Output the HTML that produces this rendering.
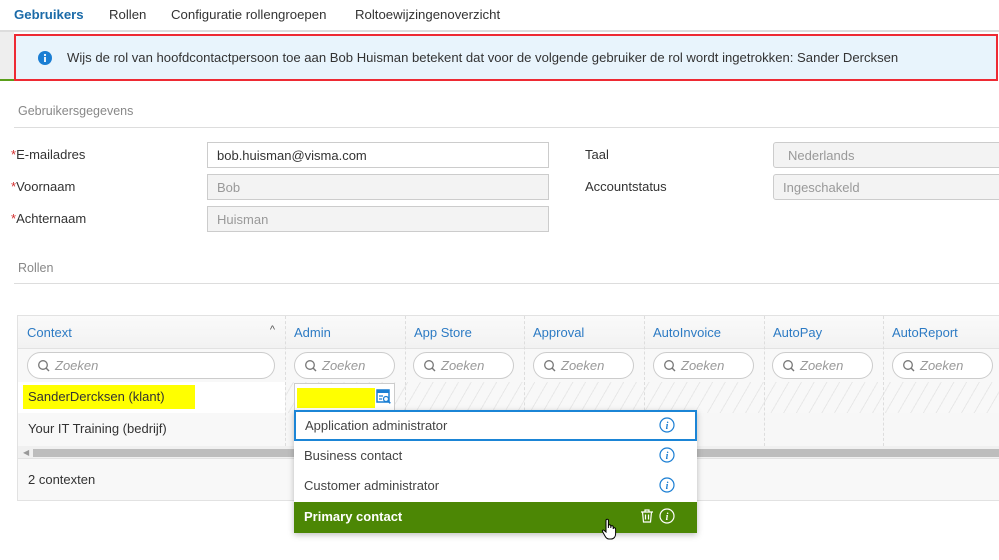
<!DOCTYPE html>
<html><head><meta charset="utf-8">
<style>
*{box-sizing:border-box;margin:0;padding:0}
body{width:999px;height:560px;overflow:hidden;background:#fff;font-family:"Liberation Sans",sans-serif;font-size:13px;color:#333;position:relative}
.a{position:absolute;white-space:nowrap}
.tab{top:7px;font-size:13.2px;color:#333}
.lbl{font-size:13px;color:#333}
.req{color:#d32f2f}
.inp{position:absolute;height:26px;border:1px solid #ccc;background:#f3f3f3;color:#999;font-size:13px;padding:5px 9px;white-space:nowrap;overflow:hidden}
.sec{font-size:12.5px;color:#888}
.hl{position:absolute;height:1px;background:#ddd}
.th{position:absolute;top:316px;height:33px;font-size:13px;color:#2d7bc4;padding:9px 9px}
.pill{position:absolute;top:352px;height:27px;border:1px solid #ccc;border-radius:14px;background:#fff;font-style:italic;color:#999;font-size:13px;padding:5px 0 0 27px}
.pill svg{position:absolute;left:9px;top:6px}
.vd{position:absolute;top:316px;height:130px;width:0;border-left:1px dashed #ddd}
.dd{position:absolute;left:294px;width:403px;height:31px;font-size:13px;color:#444;padding:7px 10px;background:#fff}
.ii{position:absolute;right:22px;top:6px}
</style></head><body>
<div class="a tab" style="left:14px;color:#1a6aa8;font-weight:bold">Gebruikers</div>
<div class="a tab" style="left:109px">Rollen</div>
<div class="a tab" style="left:171px">Configuratie rollengroepen</div>
<div class="a tab" style="left:355px">Roltoewijzingenoverzicht</div>
<div class="a" style="left:0;top:30px;width:999px;height:2px;background:#ddd"></div>
<div class="a" style="left:0;top:32px;width:14px;height:48px;background:#eee"></div>
<div class="a" style="left:0;top:79px;width:14px;height:2px;background:#5a9e1a"></div>
<div class="a" style="left:14px;top:34px;width:984px;height:47px;border:2px solid #ee2a33;background:#e8f4fc"></div>
<svg class="a" style="left:38px;top:51px" width="14" height="14" viewBox="0 0 14 14"><circle cx="7" cy="7" r="7" fill="#1a7ed3"/><rect x="6.1" y="6" width="1.8" height="5" fill="#fff"/><circle cx="7" cy="4" r="1.1" fill="#fff"/></svg>
<div class="a" style="left:67px;top:50px;font-size:13.1px;color:#333">Wijs de rol van hoofdcontactpersoon toe aan Bob Huisman betekent dat voor de volgende gebruiker de rol wordt ingetrokken: Sander Dercksen</div>
<div class="a sec" style="left:18px;top:104px">Gebruikersgegevens</div>
<div class="hl" style="left:14px;top:127px;width:985px"></div>
<div class="a lbl" style="left:11px;top:147px"><span class="req">*</span>E-mailadres</div>
<div class="a lbl" style="left:11px;top:179px"><span class="req">*</span>Voornaam</div>
<div class="a lbl" style="left:11px;top:211px"><span class="req">*</span>Achternaam</div>
<div class="inp" style="left:207px;top:142px;width:342px;background:#fff;color:#333">bob.huisman@visma.com</div>
<div class="inp" style="left:207px;top:174px;width:342px">Bob</div>
<div class="inp" style="left:207px;top:206px;width:342px">Huisman</div>
<div class="a lbl" style="left:585px;top:147px">Taal</div>
<div class="a lbl" style="left:585px;top:179px">Accountstatus</div>
<div class="inp" style="left:773px;top:142px;width:240px;padding-left:14px;border-radius:3px">Nederlands</div>
<div class="inp" style="left:773px;top:174px;width:240px;border-radius:3px">Ingeschakeld</div>
<div class="a sec" style="left:18px;top:261px">Rollen</div>
<div class="hl" style="left:14px;top:283px;width:985px"></div>
<div class="a" style="left:17px;top:315px;width:982px;height:186px;border:1px solid #e2e2e2;border-right:none;background:#f8f8f8"></div>
<div class="a" style="left:18px;top:316px;width:981px;height:33px;background:linear-gradient(#fafafa,#f2f2f2);border-bottom:1px solid #e2e2e2"></div>
<div class="a" style="left:18px;top:382px;width:981px;height:31px;background:#fff"></div>
<div class="a" style="left:285px;top:382px;width:714px;height:31px;background:repeating-linear-gradient(-60deg,#f8f8f8 0 10px,#e8e8e8 10px 11px)"></div>
<div class="a" style="left:285px;top:413px;width:714px;height:33px;background:#f7f7f7"></div>
<div class="th" style="left:18px;width:267px">Context<span style="position:absolute;right:10px;top:8px;font-size:11px;color:#555">&#94;</span></div>
<div class="th" style="left:285px;width:120px">Admin</div>
<div class="th" style="left:405px;width:119px">App Store</div>
<div class="th" style="left:524px;width:120px">Approval</div>
<div class="th" style="left:644px;width:120px">AutoInvoice</div>
<div class="th" style="left:764px;width:119px">AutoPay</div>
<div class="th" style="left:883px;width:116px">AutoReport</div>
<div class="vd" style="left:285px"></div><div class="vd" style="left:405px"></div><div class="vd" style="left:524px"></div><div class="vd" style="left:644px"></div><div class="vd" style="left:764px"></div><div class="vd" style="left:883px"></div>
<svg width="0" height="0" style="position:absolute"><defs><g id="mg"><circle cx="6" cy="6" r="4.3" fill="none" stroke="#777" stroke-width="1.3"/><path d="M9 9l3 3" stroke="#777" stroke-width="1.4"/></g></defs></svg>
<div class="pill" style="left:27px;width:248px"><svg width="13" height="13"><use href="#mg"/></svg>Zoeken</div>
<div class="pill" style="left:294px;width:101px"><svg width="13" height="13"><use href="#mg"/></svg>Zoeken</div>
<div class="pill" style="left:413px;width:101px"><svg width="13" height="13"><use href="#mg"/></svg>Zoeken</div>
<div class="pill" style="left:533px;width:101px"><svg width="13" height="13"><use href="#mg"/></svg>Zoeken</div>
<div class="pill" style="left:653px;width:101px"><svg width="13" height="13"><use href="#mg"/></svg>Zoeken</div>
<div class="pill" style="left:772px;width:101px"><svg width="13" height="13"><use href="#mg"/></svg>Zoeken</div>
<div class="pill" style="left:892px;width:101px"><svg width="13" height="13"><use href="#mg"/></svg>Zoeken</div>
<div class="a" style="left:23px;top:385px;width:172px;height:24px;background:#ffff00"></div>
<div class="a" style="left:28px;top:389px;font-size:13px;color:#333">SanderDercksen (klant)</div>
<div class="a" style="left:28px;top:421px;font-size:13px;color:#333">Your IT Training (bedrijf)</div>
<div class="a" style="left:294px;top:383px;width:101px;height:28px;border:1px solid #ccc;background:#fff"></div>
<div class="a" style="left:297px;top:388px;width:78px;height:20px;background:#ffff00"></div>
<svg class="a" style="left:376px;top:389px" width="15" height="15" viewBox="0 0 15 15"><rect x="1" y="1" width="12" height="12" fill="none" stroke="#1a7ed3" stroke-width="1.5"/><rect x="1" y="1" width="12" height="3" fill="#1a7ed3"/><path d="M3 7h4M3 10h3" stroke="#1a7ed3" stroke-width="1.3"/><circle cx="10" cy="10" r="2.5" fill="#fff" stroke="#1a7ed3" stroke-width="1.3"/><path d="M11.8 11.8l2.5 2.5" stroke="#1a7ed3" stroke-width="1.5"/></svg>
<div class="a" style="left:18px;top:446px;width:981px;height:13px;background:#f0f0f0;border-bottom:1px solid #e2e2e2"></div>
<div class="a" style="left:33px;top:449px;width:966px;height:8px;background:#bdbdbd"></div>
<div class="a" style="left:23px;top:448px;font-size:8px;color:#999">&#9664;</div>
<div class="a" style="left:28px;top:472px;font-size:13px;color:#333">2 contexten</div>
<div class="a" style="left:294px;top:410px;width:403px;height:123px;box-shadow:0 2px 6px rgba(0,0,0,.25);background:#fff"></div>
<div class="dd" style="top:410px;border:2px solid #1b85d6;padding:6px 9px">Application administrator<svg class="ii" style="right:20px;top:5px" width="16" height="16" viewBox="0 0 16 16"><circle cx="8" cy="8" r="7" fill="none" stroke="#1a7ed3" stroke-width="1.2"/><text x="8" y="12" text-anchor="middle" font-family="Liberation Serif" font-style="italic" font-weight="bold" font-size="10" fill="#1a7ed3">i</text></svg></div>
<div class="dd" style="top:441px">Business contact<svg class="ii" width="16" height="16" viewBox="0 0 16 16"><circle cx="8" cy="8" r="7" fill="none" stroke="#1a7ed3" stroke-width="1.2"/><text x="8" y="12" text-anchor="middle" font-family="Liberation Serif" font-style="italic" font-weight="bold" font-size="10" fill="#1a7ed3">i</text></svg></div>
<div class="dd" style="top:471px">Customer administrator<svg class="ii" width="16" height="16" viewBox="0 0 16 16"><circle cx="8" cy="8" r="7" fill="none" stroke="#1a7ed3" stroke-width="1.2"/><text x="8" y="12" text-anchor="middle" font-family="Liberation Serif" font-style="italic" font-weight="bold" font-size="10" fill="#1a7ed3">i</text></svg></div>
<div class="dd" style="top:502px;background:#4c8705;color:#fff;font-weight:bold">Primary contact
<svg class="ii" style="right:42px" width="16" height="16" viewBox="0 0 16 16"><path d="M2 4h12M6 4V2h4v2M3.5 4l1 10h7l1-10M6.5 6.5v5M9.5 6.5v5" fill="none" stroke="#fff" stroke-width="1.2"/></svg>
<svg class="ii" width="16" height="16" viewBox="0 0 16 16"><circle cx="8" cy="8" r="7" fill="none" stroke="#fff" stroke-width="1.2"/><text x="8" y="12" text-anchor="middle" font-family="Liberation Serif" font-style="italic" font-weight="bold" font-size="10" fill="#fff">i</text></svg></div>
<svg class="a" style="left:601px;top:518px" width="16" height="22" viewBox="0 0 16 22"><path d="M5 12V2.5a1.2 1.2 0 0 1 2.4 0V10V8a1.2 1.2 0 0 1 2.4 0v2V9a1.2 1.2 0 0 1 2.4 0v2a1.2 1.2 0 0 1 2.4 0v5c0 3-2 5-4.5 5H8c-2 0-3-1-4-3L1.5 13.5c-.6-1 .6-2 1.5-1.2L5 14z" fill="#fff" stroke="#000" stroke-width="1"/></svg>
</body></html>
